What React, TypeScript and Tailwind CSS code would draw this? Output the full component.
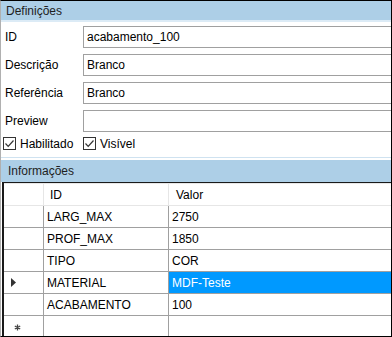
import React from "react";

const font = { fontFamily: '"Liberation Sans", Arial, sans-serif' };

function Field({ label, value }: { label: string; value: string }) {
  return (
    <div className="flex items-center h-[22px]">
      <div className="w-[82px] pl-[4px] text-[12px] text-black leading-none">{label}</div>
      <div className="flex-1 h-[22px] border border-[#a0a0a0] border-r-0 flex items-center pl-[3px] text-[12px] text-black bg-white">
        {value}
      </div>
    </div>
  );
}

function Check({ label }: { label: string }) {
  return (
    <div className="flex items-center gap-[4px]">
      <div className="w-[13px] h-[13px] border border-[#333333] bg-white flex items-center justify-center">
        <svg width="11" height="11" viewBox="0 0 11 11">
          <path d="M1.5 5.5 L4.2 8.3 L9.5 2.5" fill="none" stroke="#333" strokeWidth="1.2" />
        </svg>
      </div>
      <span className="text-[12px] text-black">{label}</span>
    </div>
  );
}

const rows = [
  { id: "LARG_MAX", v: "2750" },
  { id: "PROF_MAX", v: "1850" },
  { id: "TIPO", v: "COR" },
  { id: "MATERIAL", v: "MDF-Teste", sel: true },
  { id: "ACABAMENTO", v: "100" },
];

export default function App() {
  return (
    <div
      style={font}
      className="w-[392px] h-[337px] bg-white border-t border-r border-b border-black border-l border-l-[#b0b0b0] overflow-hidden flex flex-col"
    >
      <div className="h-[19px] bg-[#adcfe7] flex items-center pl-[5px] text-[12px] text-[#1e1e1e] shrink-0">
        Definições
      </div>
      <div className="h-[2px] bg-[#dcebf6] shrink-0" />
      <div className="flex flex-col gap-[6px] pt-[4px] shrink-0">
        <Field label="ID" value="acabamento_100" />
        <Field label="Descrição" value="Branco" />
        <Field label="Referência" value="Branco" />
        <Field label="Preview" value="" />
      </div>
      <div className="flex items-center h-[13px] mt-[5px] pl-[2px] shrink-0">
        <div className="w-[80px]">
          <Check label="Habilitado" />
        </div>
        <Check label="Visível" />
      </div>
      <div className="h-[1px] bg-[#cfe2f0] mt-[7px] shrink-0" />
      <div className="h-[2px] shrink-0" />
      <div className="h-[22px] bg-[#adcfe7] flex items-center pl-[7px] text-[12px] text-[#1e1e1e] shrink-0">
        Informações
      </div>
      <div className="flex-1 ml-[1px] border-l-2 border-t border-[#1a1a1a] flex flex-col">
        <div className="border-t border-[#e8e8e8]" />
        <div className="grid grid-cols-[40px_125px_1fr] h-[22px] text-[12px] text-black border-b border-[#e6e6e6]">
          <div className="border-r border-[#e6e6e6]" />
          <div className="flex items-center pl-[6px] border-r border-[#e6e6e6]">ID</div>
          <div className="flex items-center pl-[7px]">Valor</div>
        </div>
        {rows.map((r) => (
          <div
            key={r.id}
            className="grid grid-cols-[40px_125px_1fr] h-[22px] text-[12px] text-black border-b border-[#a0a0a0]"
          >
            <div className="border-r border-[#a0a0a0] flex items-center pl-[7px]">
              {r.sel && (
                <svg width="6" height="9" viewBox="0 0 6 9">
                  <path d="M0 0 L5 4.5 L0 9 Z" fill="#333" />
                </svg>
              )}
            </div>
            <div className="flex items-center pl-[3px] border-r border-[#a0a0a0]">{r.id}</div>
            <div className={`flex items-center pl-[3px] ${r.sel ? "bg-[#0099ff] text-white" : ""}`}>{r.v}</div>
          </div>
        ))}
        <div className="grid grid-cols-[40px_125px_1fr] h-[22px] text-[12px] text-black">
          <div className="border-r border-[#a0a0a0] flex items-center pl-[10px]">
            <svg width="7" height="7" viewBox="0 0 7 7">
              <path d="M3.5 0.5 V6.5 M0.8 2 L6.2 5 M0.8 5 L6.2 2" stroke="#444" strokeWidth="1.3" />
            </svg>
          </div>
          <div className="border-r border-[#a0a0a0]" />
          <div />
        </div>
      </div>
    </div>
  );
}
